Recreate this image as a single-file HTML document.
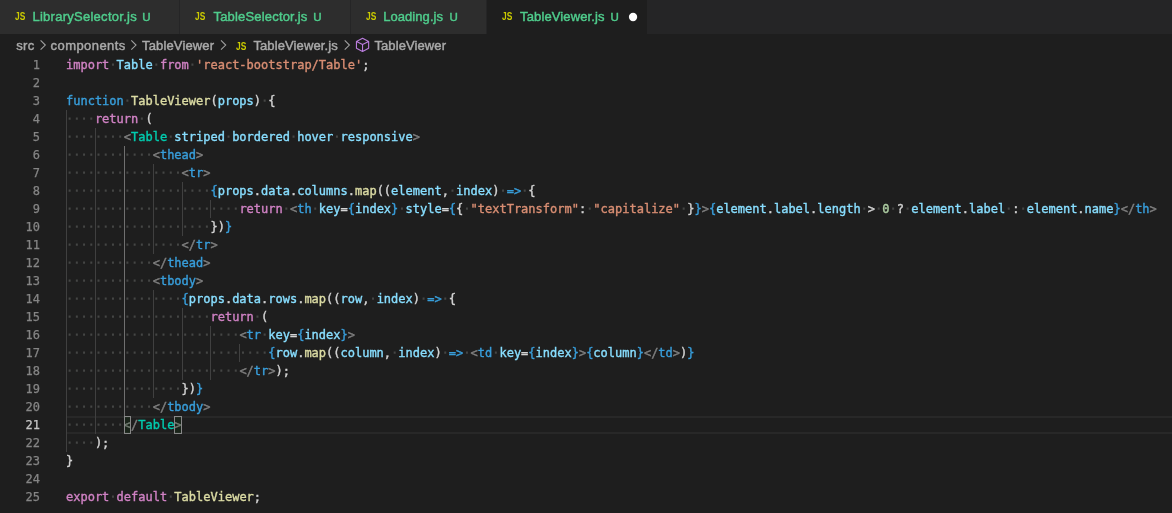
<!DOCTYPE html>
<html lang="en">
<head>
<meta charset="utf-8">
<title>TableViewer.js</title>
<style>
html,body{margin:0;padding:0;}
html{overflow:hidden;}
body{width:1172px;height:513px;overflow:hidden;background:#1e1e1e;position:relative;
 font-family:"Liberation Sans",sans-serif;}
.tabs{position:absolute;left:0;top:0;width:1172px;height:34px;background:#252526;}
.tab{position:absolute;top:0;height:34px;background:#2d2d2d;box-sizing:border-box;border-right:1px solid #252526;
 font-size:13px;line-height:34px;color:#4fcc8c;white-space:nowrap;}
.tab.active{background:#1e1e1e;}
.ic{position:absolute;top:0;font-size:10.5px;font-weight:bold;color:#cbcb00;transform:scaleX(0.8);transform-origin:0 0;letter-spacing:0;-webkit-text-stroke:0;}
.tab .ic{top:-1px;}
.tab .nm{position:absolute;top:0;}
.tab .st{position:absolute;top:0;font-size:11.5px;}
.chev,.cube{position:absolute;}
.tab.in .nm,.tab.in .st{color:#4fcc8c;}
.dot{position:absolute;}
.bc{position:absolute;left:0;top:35px;height:22px;width:1172px;font-size:13px;line-height:22px;color:#a9a9a9;white-space:nowrap;}
.bc span{position:absolute;top:0;}
.code,.tabs,.bc{will-change:transform;}
.code{-webkit-text-stroke:0.38px;}
.tabs,.bc{-webkit-text-stroke:0.45px;}
.code{position:absolute;left:0;top:0;width:1172px;height:513px;overflow:hidden;font-family:"DejaVu Sans Mono","Liberation Mono",monospace;font-size:12px;line-height:18px;white-space:pre;color:#d4d4d4;}
.ln{position:absolute;left:0;width:40px;text-align:right;height:18px;color:#858585;}
.ln.cur{color:#c6c6c6;}
.ln{-webkit-text-stroke:0.25px;}
.cl{position:absolute;left:66px;height:18px;}
.cl span{position:absolute;top:0;}
.k{color:#d082c4}.b{color:#389edb}.v{color:#88deff}.s{color:#d98e73}.f{color:#dcdca4}.t{color:#00ccaf}.g{color:#808080}.n{color:#afcfa4}.d{color:#d4d4d4}
.ws{position:absolute;left:0;top:0;fill:rgba(227,228,226,0.2);}
.gd{position:absolute;width:1px;background:#404040;}
.gd.a{background:#707070;}
.curline{position:absolute;left:66px;top:416px;width:1106px;height:18px;box-sizing:border-box;border-top:2px solid #282828;border-bottom:2px solid #282828;}
.bm{position:absolute;top:416px;width:7.3px;height:18px;box-sizing:border-box;border:1px solid #888888;background:rgba(0,100,0,0.1);}
</style>
</head>
<body>
<div class="tabs">
<div class="tab in" style="left:0px;width:180px"><span class="ic" style="left:15.0px">JS</span><span class="nm" style="left:32.4px;letter-spacing:0.27px">LibrarySelector.js</span><span class="st" style="left:142.3px">U</span></div>
<div class="tab in" style="left:180px;width:171px"><span class="ic" style="left:15.0px">JS</span><span class="nm" style="left:33.5px;letter-spacing:0.18px">TableSelector.js</span><span class="st" style="left:133.2px">U</span></div>
<div class="tab in" style="left:351px;width:136px"><span class="ic" style="left:14.5px">JS</span><span class="nm" style="left:32.2px;letter-spacing:0.06px">Loading.js</span><span class="st" style="left:98.5px">U</span></div>
<div class="tab active" style="left:487px;width:161px"><span class="ic" style="left:14.5px">JS</span><span class="nm" style="left:33.1px;letter-spacing:0.12px">TableViewer.js</span><span class="st" style="left:123.4px">U</span></div>
<svg class="dot" style="left:626px;top:10px" width="14" height="14" viewBox="0 0 14 14"><circle cx="7.05" cy="7.0" r="4.15" fill="#ffffff"/></svg>
</div>
<div class="bc">
<span style="left:16.2px;letter-spacing:0.42px">src</span>
<svg class="chev" style="left:39px;top:3px" width="9" height="14" viewBox="0 0 9 14"><polyline points="1.60,2.4 6.30,7.05 1.60,11.7" fill="none" stroke="#a0a0a0" stroke-width="1.1"/></svg>
<span style="left:50.6px;letter-spacing:0.43px">components</span>
<svg class="chev" style="left:130px;top:3px" width="9" height="14" viewBox="0 0 9 14"><polyline points="1.30,2.4 6.00,7.05 1.30,11.7" fill="none" stroke="#a0a0a0" stroke-width="1.1"/></svg>
<span style="left:142px;letter-spacing:0.15px">TableViewer</span>
<svg class="chev" style="left:219px;top:3px" width="9" height="14" viewBox="0 0 9 14"><polyline points="2.00,2.4 6.70,7.05 2.00,11.7" fill="none" stroke="#a0a0a0" stroke-width="1.1"/></svg>
<span class="ic" style="left:235.5px">JS</span>
<span style="left:253.4px;letter-spacing:0.11px">TableViewer.js</span>
<svg class="chev" style="left:343px;top:3px" width="9" height="14" viewBox="0 0 9 14"><polyline points="1.70,2.4 6.40,7.05 1.70,11.7" fill="none" stroke="#a0a0a0" stroke-width="1.1"/></svg>
<svg class="cube" style="left:355px;top:1px" width="16" height="18" viewBox="0 0 16 18"><path d="M7.55 2.25 L13.65 5.55 L13.65 12.15 L7.55 15.45 L1.45 12.15 L1.45 5.55 Z M1.45 5.55 L7.55 8.6 L13.65 5.55 M7.55 8.6 L7.55 15.45" fill="none" stroke="#ba7ddd" stroke-width="1.1" stroke-linejoin="round"/></svg>
<span style="left:374.4px;letter-spacing:0.1px">TableViewer</span>
</div>
<div class="code">
<div class="curline"></div>
<div class="gd" style="left:66.00px;top:110px;height:342px"></div>
<div class="gd" style="left:94.90px;top:128px;height:306px"></div>
<div class="gd a" style="left:123.79px;top:146px;height:270px"></div>
<div class="gd" style="left:152.69px;top:164px;height:90px"></div>
<div class="gd" style="left:152.69px;top:290px;height:108px"></div>
<div class="gd" style="left:181.58px;top:182px;height:54px"></div>
<div class="gd" style="left:181.58px;top:308px;height:72px"></div>
<div class="gd" style="left:210.48px;top:200px;height:18px"></div>
<div class="gd" style="left:210.48px;top:326px;height:54px"></div>
<div class="gd" style="left:239.38px;top:344px;height:18px"></div>
<div class="ln" style="top:56px">1</div>
<div class="cl" style="top:56px"><svg class="ws" width="305" height="18" viewBox="0 0 305 18"><path d="M45.96 7.60h2v2.2h-2zM89.30 7.60h2v2.2h-2zM125.42 7.60h2v2.2h-2z"/></svg><span class="k" style="left:0.00px">import</span><span style="left:43.34px"> </span><span class="v" style="left:50.57px">Table</span><span style="left:86.69px"> </span><span class="k" style="left:93.91px">from</span><span style="left:122.81px"> </span><span class="s" style="left:130.03px">'react-bootstrap/Table'</span><span class="d" style="left:296.18px">;</span></div>
<div class="ln" style="top:74px">2</div>
<div class="ln" style="top:92px">3</div>
<div class="cl" style="top:92px"><svg class="ws" width="211" height="18" viewBox="0 0 211 18"><path d="M60.40 7.60h2v2.2h-2zM197.66 7.60h2v2.2h-2z"/></svg><span class="b" style="left:0.00px">function</span><span style="left:57.79px"> </span><span class="f" style="left:65.02px">TableViewer</span><span class="d" style="left:144.48px">(</span><span class="v" style="left:151.70px">props</span><span class="d" style="left:187.82px">)</span><span style="left:195.05px"> </span><span class="d" style="left:202.27px">{</span></div>
<div class="ln" style="top:110px">4</div>
<div class="cl" style="top:110px"><svg class="ws" width="88" height="18" viewBox="0 0 88 18"><path d="M2.61 7.60h2v2.2h-2zM9.84 7.60h2v2.2h-2zM17.06 7.60h2v2.2h-2zM24.28 7.60h2v2.2h-2zM74.85 7.60h2v2.2h-2z"/></svg><span style="left:0.00px">    </span><span class="k" style="left:28.90px">return</span><span style="left:72.24px"> </span><span class="d" style="left:79.46px">(</span></div>
<div class="ln" style="top:128px">5</div>
<div class="cl" style="top:128px"><svg class="ws" width="355" height="18" viewBox="0 0 355 18"><path d="M2.61 7.60h2v2.2h-2zM9.84 7.60h2v2.2h-2zM17.06 7.60h2v2.2h-2zM24.28 7.60h2v2.2h-2zM31.51 7.60h2v2.2h-2zM38.73 7.60h2v2.2h-2zM45.96 7.60h2v2.2h-2zM53.18 7.60h2v2.2h-2zM103.75 7.60h2v2.2h-2zM161.54 7.60h2v2.2h-2zM226.56 7.60h2v2.2h-2zM269.90 7.60h2v2.2h-2z"/></svg><span style="left:0.00px">        </span><span class="g" style="left:57.79px">&lt;</span><span class="t" style="left:65.02px">Table</span><span style="left:101.14px"> </span><span class="v" style="left:108.36px">striped</span><span style="left:158.93px"> </span><span class="v" style="left:166.15px">bordered</span><span style="left:223.94px"> </span><span class="v" style="left:231.17px">hover</span><span style="left:267.29px"> </span><span class="v" style="left:274.51px">responsive</span><span class="g" style="left:346.75px">&gt;</span></div>
<div class="ln" style="top:146px">6</div>
<div class="cl" style="top:146px"><svg class="ws" width="139" height="18" viewBox="0 0 139 18"><path d="M2.61 7.60h2v2.2h-2zM9.84 7.60h2v2.2h-2zM17.06 7.60h2v2.2h-2zM24.28 7.60h2v2.2h-2zM31.51 7.60h2v2.2h-2zM38.73 7.60h2v2.2h-2zM45.96 7.60h2v2.2h-2zM53.18 7.60h2v2.2h-2zM60.40 7.60h2v2.2h-2zM67.63 7.60h2v2.2h-2zM74.85 7.60h2v2.2h-2zM82.08 7.60h2v2.2h-2z"/></svg><span style="left:0.00px">            </span><span class="g" style="left:86.69px">&lt;</span><span class="b" style="left:93.91px">thead</span><span class="g" style="left:130.03px">&gt;</span></div>
<div class="ln" style="top:164px">7</div>
<div class="cl" style="top:164px"><svg class="ws" width="146" height="18" viewBox="0 0 146 18"><path d="M2.61 7.60h2v2.2h-2zM9.84 7.60h2v2.2h-2zM17.06 7.60h2v2.2h-2zM24.28 7.60h2v2.2h-2zM31.51 7.60h2v2.2h-2zM38.73 7.60h2v2.2h-2zM45.96 7.60h2v2.2h-2zM53.18 7.60h2v2.2h-2zM60.40 7.60h2v2.2h-2zM67.63 7.60h2v2.2h-2zM74.85 7.60h2v2.2h-2zM82.08 7.60h2v2.2h-2zM89.30 7.60h2v2.2h-2zM96.52 7.60h2v2.2h-2zM103.75 7.60h2v2.2h-2zM110.97 7.60h2v2.2h-2z"/></svg><span style="left:0.00px">                </span><span class="g" style="left:115.58px">&lt;</span><span class="b" style="left:122.81px">tr</span><span class="g" style="left:137.26px">&gt;</span></div>
<div class="ln" style="top:182px">8</div>
<div class="cl" style="top:182px"><svg class="ws" width="471" height="18" viewBox="0 0 471 18"><path d="M2.61 7.60h2v2.2h-2zM9.84 7.60h2v2.2h-2zM17.06 7.60h2v2.2h-2zM24.28 7.60h2v2.2h-2zM31.51 7.60h2v2.2h-2zM38.73 7.60h2v2.2h-2zM45.96 7.60h2v2.2h-2zM53.18 7.60h2v2.2h-2zM60.40 7.60h2v2.2h-2zM67.63 7.60h2v2.2h-2zM74.85 7.60h2v2.2h-2zM82.08 7.60h2v2.2h-2zM89.30 7.60h2v2.2h-2zM96.52 7.60h2v2.2h-2zM103.75 7.60h2v2.2h-2zM110.97 7.60h2v2.2h-2zM118.20 7.60h2v2.2h-2zM125.42 7.60h2v2.2h-2zM132.64 7.60h2v2.2h-2zM139.87 7.60h2v2.2h-2zM385.48 7.60h2v2.2h-2zM436.05 7.60h2v2.2h-2zM457.72 7.60h2v2.2h-2z"/></svg><span style="left:0.00px">                    </span><span class="b" style="left:144.48px">{</span><span class="v" style="left:151.70px">props</span><span class="d" style="left:187.82px">.</span><span class="v" style="left:195.05px">data</span><span class="d" style="left:223.94px">.</span><span class="v" style="left:231.17px">columns</span><span class="d" style="left:281.74px">.</span><span class="f" style="left:288.96px">map</span><span class="d" style="left:310.63px">((</span><span class="v" style="left:325.08px">element</span><span class="d" style="left:375.65px">,</span><span style="left:382.87px"> </span><span class="v" style="left:390.10px">index</span><span class="d" style="left:426.22px">)</span><span style="left:433.44px"> </span><span class="b" style="left:440.66px">=&gt;</span><span style="left:455.11px"> </span><span class="d" style="left:462.34px">{</span></div>
<div class="ln" style="top:200px">9</div>
<div class="cl" style="top:200px"><svg class="ws" width="1092" height="18" viewBox="0 0 1092 18"><path d="M2.61 7.60h2v2.2h-2zM9.84 7.60h2v2.2h-2zM17.06 7.60h2v2.2h-2zM24.28 7.60h2v2.2h-2zM31.51 7.60h2v2.2h-2zM38.73 7.60h2v2.2h-2zM45.96 7.60h2v2.2h-2zM53.18 7.60h2v2.2h-2zM60.40 7.60h2v2.2h-2zM67.63 7.60h2v2.2h-2zM74.85 7.60h2v2.2h-2zM82.08 7.60h2v2.2h-2zM89.30 7.60h2v2.2h-2zM96.52 7.60h2v2.2h-2zM103.75 7.60h2v2.2h-2zM110.97 7.60h2v2.2h-2zM118.20 7.60h2v2.2h-2zM125.42 7.60h2v2.2h-2zM132.64 7.60h2v2.2h-2zM139.87 7.60h2v2.2h-2zM147.09 7.60h2v2.2h-2zM154.32 7.60h2v2.2h-2zM161.54 7.60h2v2.2h-2zM168.76 7.60h2v2.2h-2zM219.33 7.60h2v2.2h-2zM248.23 7.60h2v2.2h-2zM334.92 7.60h2v2.2h-2zM399.93 7.60h2v2.2h-2zM522.74 7.60h2v2.2h-2zM616.65 7.60h2v2.2h-2zM797.25 7.60h2v2.2h-2zM811.70 7.60h2v2.2h-2zM826.15 7.60h2v2.2h-2zM840.60 7.60h2v2.2h-2zM941.73 7.60h2v2.2h-2zM956.18 7.60h2v2.2h-2z"/></svg><span style="left:0.00px">                        </span><span class="k" style="left:173.38px">return</span><span style="left:216.72px"> </span><span class="g" style="left:223.94px">&lt;</span><span class="b" style="left:231.17px">th</span><span style="left:245.62px"> </span><span class="v" style="left:252.84px">key</span><span class="d" style="left:274.51px">=</span><span class="b" style="left:281.74px">{</span><span class="v" style="left:288.96px">index</span><span class="b" style="left:325.08px">}</span><span style="left:332.30px"> </span><span class="v" style="left:339.53px">style</span><span class="d" style="left:375.65px">=</span><span class="b" style="left:382.87px">{</span><span class="d" style="left:390.10px">{</span><span style="left:397.32px"> </span><span class="s" style="left:404.54px">"textTransform"</span><span class="d" style="left:512.90px">:</span><span style="left:520.13px"> </span><span class="s" style="left:527.35px">"capitalize"</span><span style="left:614.04px"> </span><span class="d" style="left:621.26px">}</span><span class="b" style="left:628.49px">}</span><span class="g" style="left:635.71px">&gt;</span><span class="b" style="left:642.94px">{</span><span class="v" style="left:650.16px">element</span><span class="d" style="left:700.73px">.</span><span class="v" style="left:707.95px">label</span><span class="d" style="left:744.07px">.</span><span class="v" style="left:751.30px">length</span><span style="left:794.64px"> </span><span class="d" style="left:801.86px">&gt;</span><span style="left:809.09px"> </span><span class="n" style="left:816.31px">0</span><span style="left:823.54px"> </span><span class="d" style="left:830.76px">?</span><span style="left:837.98px"> </span><span class="v" style="left:845.21px">element</span><span class="d" style="left:895.78px">.</span><span class="v" style="left:903.00px">label</span><span style="left:939.12px"> </span><span class="d" style="left:946.34px">:</span><span style="left:953.57px"> </span><span class="v" style="left:960.79px">element</span><span class="d" style="left:1011.36px">.</span><span class="v" style="left:1018.58px">name</span><span class="b" style="left:1047.48px">}</span><span class="g" style="left:1054.70px">&lt;/</span><span class="b" style="left:1069.15px">th</span><span class="g" style="left:1083.60px">&gt;</span></div>
<div class="ln" style="top:218px">10</div>
<div class="cl" style="top:218px"><svg class="ws" width="168" height="18" viewBox="0 0 168 18"><path d="M2.61 7.60h2v2.2h-2zM9.84 7.60h2v2.2h-2zM17.06 7.60h2v2.2h-2zM24.28 7.60h2v2.2h-2zM31.51 7.60h2v2.2h-2zM38.73 7.60h2v2.2h-2zM45.96 7.60h2v2.2h-2zM53.18 7.60h2v2.2h-2zM60.40 7.60h2v2.2h-2zM67.63 7.60h2v2.2h-2zM74.85 7.60h2v2.2h-2zM82.08 7.60h2v2.2h-2zM89.30 7.60h2v2.2h-2zM96.52 7.60h2v2.2h-2zM103.75 7.60h2v2.2h-2zM110.97 7.60h2v2.2h-2zM118.20 7.60h2v2.2h-2zM125.42 7.60h2v2.2h-2zM132.64 7.60h2v2.2h-2zM139.87 7.60h2v2.2h-2z"/></svg><span style="left:0.00px">                    </span><span class="d" style="left:144.48px">})</span><span class="b" style="left:158.93px">}</span></div>
<div class="ln" style="top:236px">11</div>
<div class="cl" style="top:236px"><svg class="ws" width="153" height="18" viewBox="0 0 153 18"><path d="M2.61 7.60h2v2.2h-2zM9.84 7.60h2v2.2h-2zM17.06 7.60h2v2.2h-2zM24.28 7.60h2v2.2h-2zM31.51 7.60h2v2.2h-2zM38.73 7.60h2v2.2h-2zM45.96 7.60h2v2.2h-2zM53.18 7.60h2v2.2h-2zM60.40 7.60h2v2.2h-2zM67.63 7.60h2v2.2h-2zM74.85 7.60h2v2.2h-2zM82.08 7.60h2v2.2h-2zM89.30 7.60h2v2.2h-2zM96.52 7.60h2v2.2h-2zM103.75 7.60h2v2.2h-2zM110.97 7.60h2v2.2h-2z"/></svg><span style="left:0.00px">                </span><span class="g" style="left:115.58px">&lt;/</span><span class="b" style="left:130.03px">tr</span><span class="g" style="left:144.48px">&gt;</span></div>
<div class="ln" style="top:254px">12</div>
<div class="cl" style="top:254px"><svg class="ws" width="146" height="18" viewBox="0 0 146 18"><path d="M2.61 7.60h2v2.2h-2zM9.84 7.60h2v2.2h-2zM17.06 7.60h2v2.2h-2zM24.28 7.60h2v2.2h-2zM31.51 7.60h2v2.2h-2zM38.73 7.60h2v2.2h-2zM45.96 7.60h2v2.2h-2zM53.18 7.60h2v2.2h-2zM60.40 7.60h2v2.2h-2zM67.63 7.60h2v2.2h-2zM74.85 7.60h2v2.2h-2zM82.08 7.60h2v2.2h-2z"/></svg><span style="left:0.00px">            </span><span class="g" style="left:86.69px">&lt;/</span><span class="b" style="left:101.14px">thead</span><span class="g" style="left:137.26px">&gt;</span></div>
<div class="ln" style="top:272px">13</div>
<div class="cl" style="top:272px"><svg class="ws" width="139" height="18" viewBox="0 0 139 18"><path d="M2.61 7.60h2v2.2h-2zM9.84 7.60h2v2.2h-2zM17.06 7.60h2v2.2h-2zM24.28 7.60h2v2.2h-2zM31.51 7.60h2v2.2h-2zM38.73 7.60h2v2.2h-2zM45.96 7.60h2v2.2h-2zM53.18 7.60h2v2.2h-2zM60.40 7.60h2v2.2h-2zM67.63 7.60h2v2.2h-2zM74.85 7.60h2v2.2h-2zM82.08 7.60h2v2.2h-2z"/></svg><span style="left:0.00px">            </span><span class="g" style="left:86.69px">&lt;</span><span class="b" style="left:93.91px">tbody</span><span class="g" style="left:130.03px">&gt;</span></div>
<div class="ln" style="top:290px">14</div>
<div class="cl" style="top:290px"><svg class="ws" width="392" height="18" viewBox="0 0 392 18"><path d="M2.61 7.60h2v2.2h-2zM9.84 7.60h2v2.2h-2zM17.06 7.60h2v2.2h-2zM24.28 7.60h2v2.2h-2zM31.51 7.60h2v2.2h-2zM38.73 7.60h2v2.2h-2zM45.96 7.60h2v2.2h-2zM53.18 7.60h2v2.2h-2zM60.40 7.60h2v2.2h-2zM67.63 7.60h2v2.2h-2zM74.85 7.60h2v2.2h-2zM82.08 7.60h2v2.2h-2zM89.30 7.60h2v2.2h-2zM96.52 7.60h2v2.2h-2zM103.75 7.60h2v2.2h-2zM110.97 7.60h2v2.2h-2zM306.02 7.60h2v2.2h-2zM356.59 7.60h2v2.2h-2zM378.26 7.60h2v2.2h-2z"/></svg><span style="left:0.00px">                </span><span class="b" style="left:115.58px">{</span><span class="v" style="left:122.81px">props</span><span class="d" style="left:158.93px">.</span><span class="v" style="left:166.15px">data</span><span class="d" style="left:195.05px">.</span><span class="v" style="left:202.27px">rows</span><span class="d" style="left:231.17px">.</span><span class="f" style="left:238.39px">map</span><span class="d" style="left:260.06px">((</span><span class="v" style="left:274.51px">row</span><span class="d" style="left:296.18px">,</span><span style="left:303.41px"> </span><span class="v" style="left:310.63px">index</span><span class="d" style="left:346.75px">)</span><span style="left:353.98px"> </span><span class="b" style="left:361.20px">=&gt;</span><span style="left:375.65px"> </span><span class="d" style="left:382.87px">{</span></div>
<div class="ln" style="top:308px">15</div>
<div class="cl" style="top:308px"><svg class="ws" width="204" height="18" viewBox="0 0 204 18"><path d="M2.61 7.60h2v2.2h-2zM9.84 7.60h2v2.2h-2zM17.06 7.60h2v2.2h-2zM24.28 7.60h2v2.2h-2zM31.51 7.60h2v2.2h-2zM38.73 7.60h2v2.2h-2zM45.96 7.60h2v2.2h-2zM53.18 7.60h2v2.2h-2zM60.40 7.60h2v2.2h-2zM67.63 7.60h2v2.2h-2zM74.85 7.60h2v2.2h-2zM82.08 7.60h2v2.2h-2zM89.30 7.60h2v2.2h-2zM96.52 7.60h2v2.2h-2zM103.75 7.60h2v2.2h-2zM110.97 7.60h2v2.2h-2zM118.20 7.60h2v2.2h-2zM125.42 7.60h2v2.2h-2zM132.64 7.60h2v2.2h-2zM139.87 7.60h2v2.2h-2zM190.44 7.60h2v2.2h-2z"/></svg><span style="left:0.00px">                    </span><span class="k" style="left:144.48px">return</span><span style="left:187.82px"> </span><span class="d" style="left:195.05px">(</span></div>
<div class="ln" style="top:326px">16</div>
<div class="cl" style="top:326px"><svg class="ws" width="290" height="18" viewBox="0 0 290 18"><path d="M2.61 7.60h2v2.2h-2zM9.84 7.60h2v2.2h-2zM17.06 7.60h2v2.2h-2zM24.28 7.60h2v2.2h-2zM31.51 7.60h2v2.2h-2zM38.73 7.60h2v2.2h-2zM45.96 7.60h2v2.2h-2zM53.18 7.60h2v2.2h-2zM60.40 7.60h2v2.2h-2zM67.63 7.60h2v2.2h-2zM74.85 7.60h2v2.2h-2zM82.08 7.60h2v2.2h-2zM89.30 7.60h2v2.2h-2zM96.52 7.60h2v2.2h-2zM103.75 7.60h2v2.2h-2zM110.97 7.60h2v2.2h-2zM118.20 7.60h2v2.2h-2zM125.42 7.60h2v2.2h-2zM132.64 7.60h2v2.2h-2zM139.87 7.60h2v2.2h-2zM147.09 7.60h2v2.2h-2zM154.32 7.60h2v2.2h-2zM161.54 7.60h2v2.2h-2zM168.76 7.60h2v2.2h-2zM197.66 7.60h2v2.2h-2z"/></svg><span style="left:0.00px">                        </span><span class="g" style="left:173.38px">&lt;</span><span class="b" style="left:180.60px">tr</span><span style="left:195.05px"> </span><span class="v" style="left:202.27px">key</span><span class="d" style="left:223.94px">=</span><span class="b" style="left:231.17px">{</span><span class="v" style="left:238.39px">index</span><span class="b" style="left:274.51px">}</span><span class="g" style="left:281.74px">&gt;</span></div>
<div class="ln" style="top:344px">17</div>
<div class="cl" style="top:344px"><svg class="ws" width="630" height="18" viewBox="0 0 630 18"><path d="M2.61 7.60h2v2.2h-2zM9.84 7.60h2v2.2h-2zM17.06 7.60h2v2.2h-2zM24.28 7.60h2v2.2h-2zM31.51 7.60h2v2.2h-2zM38.73 7.60h2v2.2h-2zM45.96 7.60h2v2.2h-2zM53.18 7.60h2v2.2h-2zM60.40 7.60h2v2.2h-2zM67.63 7.60h2v2.2h-2zM74.85 7.60h2v2.2h-2zM82.08 7.60h2v2.2h-2zM89.30 7.60h2v2.2h-2zM96.52 7.60h2v2.2h-2zM103.75 7.60h2v2.2h-2zM110.97 7.60h2v2.2h-2zM118.20 7.60h2v2.2h-2zM125.42 7.60h2v2.2h-2zM132.64 7.60h2v2.2h-2zM139.87 7.60h2v2.2h-2zM147.09 7.60h2v2.2h-2zM154.32 7.60h2v2.2h-2zM161.54 7.60h2v2.2h-2zM168.76 7.60h2v2.2h-2zM175.99 7.60h2v2.2h-2zM183.21 7.60h2v2.2h-2zM190.44 7.60h2v2.2h-2zM197.66 7.60h2v2.2h-2zM327.69 7.60h2v2.2h-2zM378.26 7.60h2v2.2h-2zM399.93 7.60h2v2.2h-2zM428.83 7.60h2v2.2h-2z"/></svg><span style="left:0.00px">                            </span><span class="b" style="left:202.27px">{</span><span class="v" style="left:209.50px">row</span><span class="d" style="left:231.17px">.</span><span class="f" style="left:238.39px">map</span><span class="d" style="left:260.06px">((</span><span class="v" style="left:274.51px">column</span><span class="d" style="left:317.86px">,</span><span style="left:325.08px"> </span><span class="v" style="left:332.30px">index</span><span class="d" style="left:368.42px">)</span><span style="left:375.65px"> </span><span class="b" style="left:382.87px">=&gt;</span><span style="left:397.32px"> </span><span class="g" style="left:404.54px">&lt;</span><span class="b" style="left:411.77px">td</span><span style="left:426.22px"> </span><span class="v" style="left:433.44px">key</span><span class="d" style="left:455.11px">=</span><span class="b" style="left:462.34px">{</span><span class="v" style="left:469.56px">index</span><span class="b" style="left:505.68px">}</span><span class="g" style="left:512.90px">&gt;</span><span class="b" style="left:520.13px">{</span><span class="v" style="left:527.35px">column</span><span class="b" style="left:570.70px">}</span><span class="g" style="left:577.92px">&lt;/</span><span class="b" style="left:592.37px">td</span><span class="g" style="left:606.82px">&gt;</span><span class="d" style="left:614.04px">)</span><span class="b" style="left:621.26px">}</span></div>
<div class="ln" style="top:362px">18</div>
<div class="cl" style="top:362px"><svg class="ws" width="225" height="18" viewBox="0 0 225 18"><path d="M2.61 7.60h2v2.2h-2zM9.84 7.60h2v2.2h-2zM17.06 7.60h2v2.2h-2zM24.28 7.60h2v2.2h-2zM31.51 7.60h2v2.2h-2zM38.73 7.60h2v2.2h-2zM45.96 7.60h2v2.2h-2zM53.18 7.60h2v2.2h-2zM60.40 7.60h2v2.2h-2zM67.63 7.60h2v2.2h-2zM74.85 7.60h2v2.2h-2zM82.08 7.60h2v2.2h-2zM89.30 7.60h2v2.2h-2zM96.52 7.60h2v2.2h-2zM103.75 7.60h2v2.2h-2zM110.97 7.60h2v2.2h-2zM118.20 7.60h2v2.2h-2zM125.42 7.60h2v2.2h-2zM132.64 7.60h2v2.2h-2zM139.87 7.60h2v2.2h-2zM147.09 7.60h2v2.2h-2zM154.32 7.60h2v2.2h-2zM161.54 7.60h2v2.2h-2zM168.76 7.60h2v2.2h-2z"/></svg><span style="left:0.00px">                        </span><span class="g" style="left:173.38px">&lt;/</span><span class="b" style="left:187.82px">tr</span><span class="g" style="left:202.27px">&gt;</span><span class="d" style="left:209.50px">);</span></div>
<div class="ln" style="top:380px">19</div>
<div class="cl" style="top:380px"><svg class="ws" width="139" height="18" viewBox="0 0 139 18"><path d="M2.61 7.60h2v2.2h-2zM9.84 7.60h2v2.2h-2zM17.06 7.60h2v2.2h-2zM24.28 7.60h2v2.2h-2zM31.51 7.60h2v2.2h-2zM38.73 7.60h2v2.2h-2zM45.96 7.60h2v2.2h-2zM53.18 7.60h2v2.2h-2zM60.40 7.60h2v2.2h-2zM67.63 7.60h2v2.2h-2zM74.85 7.60h2v2.2h-2zM82.08 7.60h2v2.2h-2zM89.30 7.60h2v2.2h-2zM96.52 7.60h2v2.2h-2zM103.75 7.60h2v2.2h-2zM110.97 7.60h2v2.2h-2z"/></svg><span style="left:0.00px">                </span><span class="d" style="left:115.58px">})</span><span class="b" style="left:130.03px">}</span></div>
<div class="ln" style="top:398px">20</div>
<div class="cl" style="top:398px"><svg class="ws" width="146" height="18" viewBox="0 0 146 18"><path d="M2.61 7.60h2v2.2h-2zM9.84 7.60h2v2.2h-2zM17.06 7.60h2v2.2h-2zM24.28 7.60h2v2.2h-2zM31.51 7.60h2v2.2h-2zM38.73 7.60h2v2.2h-2zM45.96 7.60h2v2.2h-2zM53.18 7.60h2v2.2h-2zM60.40 7.60h2v2.2h-2zM67.63 7.60h2v2.2h-2zM74.85 7.60h2v2.2h-2zM82.08 7.60h2v2.2h-2z"/></svg><span style="left:0.00px">            </span><span class="g" style="left:86.69px">&lt;/</span><span class="b" style="left:101.14px">tbody</span><span class="g" style="left:137.26px">&gt;</span></div>
<div class="ln cur" style="top:416px">21</div>
<div class="cl" style="top:416px"><svg class="ws" width="117" height="18" viewBox="0 0 117 18"><path d="M2.61 7.60h2v2.2h-2zM9.84 7.60h2v2.2h-2zM17.06 7.60h2v2.2h-2zM24.28 7.60h2v2.2h-2zM31.51 7.60h2v2.2h-2zM38.73 7.60h2v2.2h-2zM45.96 7.60h2v2.2h-2zM53.18 7.60h2v2.2h-2z"/></svg><span style="left:0.00px">        </span><span class="g" style="left:57.79px">&lt;/</span><span class="t" style="left:72.24px">Table</span><span class="g" style="left:108.36px">&gt;</span></div>
<div class="ln" style="top:434px">22</div>
<div class="cl" style="top:434px"><svg class="ws" width="45" height="18" viewBox="0 0 45 18"><path d="M2.61 7.60h2v2.2h-2zM9.84 7.60h2v2.2h-2zM17.06 7.60h2v2.2h-2zM24.28 7.60h2v2.2h-2z"/></svg><span style="left:0.00px">    </span><span class="d" style="left:28.90px">);</span></div>
<div class="ln" style="top:452px">23</div>
<div class="cl" style="top:452px"><span class="d" style="left:0.00px">}</span></div>
<div class="ln" style="top:470px">24</div>
<div class="ln" style="top:488px">25</div>
<div class="cl" style="top:488px"><svg class="ws" width="197" height="18" viewBox="0 0 197 18"><path d="M45.96 7.60h2v2.2h-2zM103.75 7.60h2v2.2h-2z"/></svg><span class="k" style="left:0.00px">export</span><span style="left:43.34px"> </span><span class="k" style="left:50.57px">default</span><span style="left:101.14px"> </span><span class="f" style="left:108.36px">TableViewer</span><span class="d" style="left:187.82px">;</span></div>
<div class="bm" style="left:123.79px"></div>
<div class="bm" style="left:174.36px"></div>
</div>
</body></html>
